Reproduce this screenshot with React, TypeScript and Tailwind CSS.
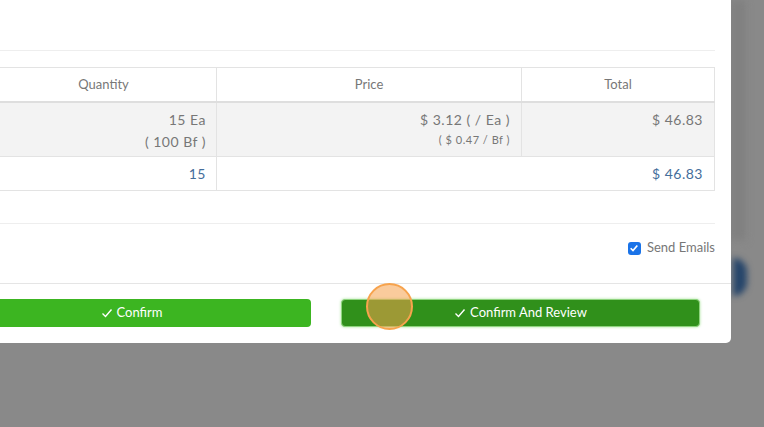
const font = { fontFamily: "Lato, 'Open Sans', sans-serif" };

export default function App() {
  return (
    <div
      className="w-[764px] h-[427px] overflow-hidden bg-[#898989] text-[#777] relative"
      style={font}
    >
      {/* faint blurred things behind the overlay */}
      <div className="absolute left-[733px] top-[258px] w-[14px] h-[38px] rounded-r-full bg-[#26456a] blur-[3px]" />
      <div className="absolute left-[731px] top-[0px] w-[14px] h-[240px] bg-[#7f7f7f] blur-[4px]" />

      <div className="relative ml-[-200px] w-[931px] h-[343px] bg-white rounded-br-[5px] flex flex-col">
        <div className="h-[51px] mx-[15px] mr-[16px] border-b border-[#eeeeee]" />
        <div className="pl-[15px] pr-[16px] pt-[16px]">
          <table className="w-full border-collapse text-[13px]">
            <thead>
              <tr className="h-[34px]">
                <th className="w-[175px] border border-[#e3e3e3] font-normal" />
                <th className="w-[226px] border border-[#e3e3e3] font-normal text-center">Quantity</th>
                <th className="w-[305px] border border-[#e3e3e3] font-normal text-center">Price</th>
                <th className="border border-[#e3e3e3] font-normal text-center">Total</th>
              </tr>
            </thead>
            <tbody className="text-[14px] tracking-[0.5px]">
              <tr className="bg-[#f3f3f3] h-[55px] align-top">
                <td className="border border-[#e3e3e3] border-t-2 border-t-[#dedede]" />
                <td className="border border-[#e3e3e3] border-t-2 border-t-[#dedede] text-right pr-[10px] pt-[6px] leading-[22px]">
                  <div>15 Ea</div>
                  <div>( 100 Bf )</div>
                </td>
                <td className="border border-[#e3e3e3] border-t-2 border-t-[#dedede] text-right pr-[11px] pt-[6px]">
                  <div className="leading-[22px]">$ 3.12 ( / Ea )</div>
                  <div className="text-[11px] leading-[18px]">( $ 0.47 / Bf )</div>
                </td>
                <td className="border border-[#e3e3e3] border-t-2 border-t-[#dedede] text-right pr-[11px] pt-[6px] leading-[22px]">
                  $ 46.83
                </td>
              </tr>
              <tr className="h-[34px] text-[#446e9b]">
                <td className="border border-[#e3e3e3]" />
                <td className="border border-[#e3e3e3] text-right pr-[10px]">15</td>
                <td colSpan={2} className="border border-[#e3e3e3] text-right pr-[11px]">$ 46.83</td>
              </tr>
            </tbody>
          </table>
        </div>
        <div className="mt-[32px] ml-[15px] mr-[16px] border-t border-[#eeeeee]" />
        <div className="mr-[16px] mt-[14px] flex justify-end items-center gap-[6px] text-[13px] h-[20px]">
          <span className="w-[13px] h-[13px] rounded-[3px] bg-[#1a73e8] flex items-center justify-center">
            <svg viewBox="0 0 12 12" className="w-[10px] h-[10px]">
              <path d="M2 6.3 L4.8 9 L10 3" fill="none" stroke="white" strokeWidth="2" />
            </svg>
          </span>
          <span>Send Emails</span>
        </div>
        <div className="mt-[25px] border-t border-[#e5e5e5]" />
        <div className="flex justify-end gap-[30px] pr-[31px] pt-[15px]">
          <button className="w-[359px] h-[28px] rounded-[4px] bg-[#3cb521] text-white text-[13px] flex items-center justify-center gap-[4px]">
            <Check />
            Confirm
          </button>
          <button className="w-[359px] h-[28px] rounded-[4px] bg-[#30901b] border border-[#8fd47f] text-white text-[13px] flex items-center justify-center gap-[4px] shadow-[0_0_3px_#a6e39a]">
            <Check />
            Confirm And Review
          </button>
        </div>
      </div>

      {/* click highlight */}
      <div className="absolute left-[366px] top-[283px] w-[47px] h-[47px] rounded-full bg-[#f5a04a]/55 border-2 border-[#f7a34d]" />
    </div>
  );
}

function Check() {
  return (
    <svg viewBox="0 0 12 12" className="w-[12px] h-[12px]">
      <path d="M1.5 6.5 L4.5 9.5 L10.5 2.5" fill="none" stroke="white" strokeWidth="1.4" />
    </svg>
  );
}
